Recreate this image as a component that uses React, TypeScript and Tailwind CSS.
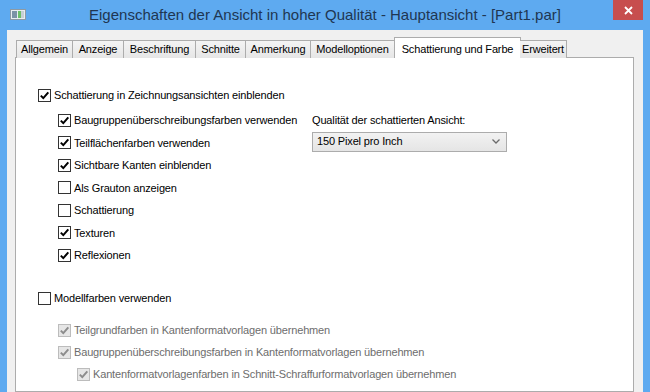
import React from "react";
import clsx from "clsx";

const font = { fontFamily: '"Liberation Sans", Arial, sans-serif' };

type BoxProps = { checked?: boolean; disabled?: boolean };

const CheckBox = ({ checked, disabled }: BoxProps) => (
  <span
    className={clsx(
      "w-[13px] h-[13px] border flex items-center justify-center shrink-0",
      disabled ? "border-[#bcbcbc] bg-[#e6e6e6]" : "border-[#333333] bg-white"
    )}
  >
    {checked && (
      <svg width="11" height="11" viewBox="0 0 11 11">
        <path
          d="M1.8 5.6 L4.3 8.1 L9.3 2.4"
          fill="none"
          stroke={disabled ? "#8c8c8c" : "#000000"}
          strokeWidth="2"
        />
      </svg>
    )}
  </span>
);

type RowProps = { label: string; checked?: boolean; disabled?: boolean; className?: string };

const Row = ({ label, checked, disabled, className }: RowProps) => (
  <div className={clsx("flex items-center gap-[3px] whitespace-nowrap", className)}>
    <CheckBox checked={checked} disabled={disabled} />
    <span className={disabled ? "text-[#6d6d6d]" : "text-black"}>{label}</span>
  </div>
);

const tabs = [
  { name: "Allgemein", w: "w-[57px]" },
  { name: "Anzeige", w: "w-[51px]" },
  { name: "Beschriftung", w: "w-[72px]" },
  { name: "Schnitte", w: "w-[50px]" },
  { name: "Anmerkung", w: "w-[65px]" },
  { name: "Modelloptionen", w: "w-[84px]" },
  { name: "Schattierung und Farbe", w: "w-[127px]", active: true },
  { name: "Erweitert", w: "w-[47px]" },
];

const App = () => {
  return (
    <div
      className="w-[650px] h-[392px] bg-[#5eaaf0] flex flex-col overflow-hidden text-[11px] tracking-[-0.15px]"
      style={font}
    >
      {/* title bar */}
      <div className="relative h-[30px] shrink-0 flex items-center justify-center">
        <svg className="absolute left-[10px] top-[9px]" width="16" height="11" viewBox="0 0 16 11">
          <rect x="0.5" y="0.5" width="15" height="10" fill="#e8edf0" stroke="#8d9aa4" />
          <rect x="2" y="2" width="5" height="7" fill="#7c93a6" />
          <rect x="8" y="2" width="3" height="7" fill="#6cbf6a" />
          <rect x="11" y="2" width="3" height="7" fill="#c6d0d6" />
        </svg>
        <span className="text-[15px] tracking-normal text-[#1f3652] mt-[1px]">
          Eigenschaften der Ansicht in hoher Qualität - Hauptansicht - [Part1.par]
        </span>
        <div className="absolute right-[7px] top-0 w-[30px] h-[20px] bg-[#c74e4e] flex items-center justify-center">
          <svg width="9" height="9" viewBox="0 0 9 9">
            <path d="M1 1 L8 8 M8 1 L1 8" stroke="#ffffff" strokeWidth="1.8" />
          </svg>
        </div>
      </div>

      {/* client area */}
      <div className="flex-1 mx-[7px] bg-[#f0f0f0] pt-[7px] pl-[8px] pr-[9px] flex flex-col">
        <div className="flex items-end h-[21px] pl-px relative z-10">
          {tabs.map((t) =>
            t.active ? (
              <div
                key={t.name}
                className={clsx(
                  t.w,
                  "h-[21px] -mx-[1px] bg-white border border-b-0 border-[#acacac] flex items-start justify-center pt-[3px] text-black"
                )}
              >
                {t.name}
              </div>
            ) : (
              <div
                key={t.name}
                className={clsx(
                  t.w,
                  "h-[18px] bg-gradient-to-b from-[#f4f4f4] to-[#e6e6e6] border border-b-0 border-l-0 first:border-l border-[#acacac] flex items-center justify-center text-black"
                )}
              >
                {t.name}
              </div>
            )
          )}
        </div>
        <div className="flex-1 bg-white border border-[#acacac] -mt-px pl-[22px] pt-[26px]">
          <Row label="Schattierung in Zeichnungsansichten einblenden" checked className="h-[22px]" />
          <div className="flex mt-[3px]">
            <div className="w-[254px] ml-[20px] flex flex-col">
              <Row label="Baugruppenüberschreibungsfarben verwenden" checked className="h-[22.5px]" />
              <Row label="Teilflächenfarben verwenden" checked className="h-[22.5px]" />
              <Row label="Sichtbare Kanten einblenden" checked className="h-[22.5px]" />
              <Row label="Als Grauton anzeigen" className="h-[22.5px]" />
              <Row label="Schattierung" className="h-[22.5px]" />
              <Row label="Texturen" checked className="h-[22.5px]" />
              <Row label="Reflexionen" checked className="h-[22.5px]" />
            </div>
            <div className="flex flex-col">
              <div className="h-[22.5px] flex items-center">Qualität der schattierten Ansicht:</div>
              <div className="w-[195px] h-[20px] border border-[#acacac] bg-gradient-to-b from-[#f2f2f2] to-[#e5e5e5] flex items-center justify-between pl-[4px] pr-[6px]">
                <span>150 Pixel pro Inch</span>
                <svg width="8" height="5" viewBox="0 0 8 5">
                  <path d="M0.5 0.5 L4 4 L7.5 0.5" fill="none" stroke="#6b6b6b" strokeWidth="1.3" />
                </svg>
              </div>
            </div>
          </div>
          <Row label="Modellfarben verwenden" className="h-[22px] mt-[21px]" />
          <div className="ml-[20px] mt-[10px] flex flex-col">
            <Row label="Teilgrundfarben in Kantenformatvorlagen übernehmen" checked disabled className="h-[22px]" />
            <Row label="Baugruppenüberschreibungsfarben in Kantenformatvorlagen übernehmen" checked disabled className="h-[22px]" />
            <Row
              label="Kantenformatvorlagenfarben in Schnitt-Schraffurformatvorlagen übernehmen"
              checked
              disabled
              className="h-[22px] ml-[19px]"
            />
          </div>
        </div>
      </div>
    </div>
  );
};

export default App;
